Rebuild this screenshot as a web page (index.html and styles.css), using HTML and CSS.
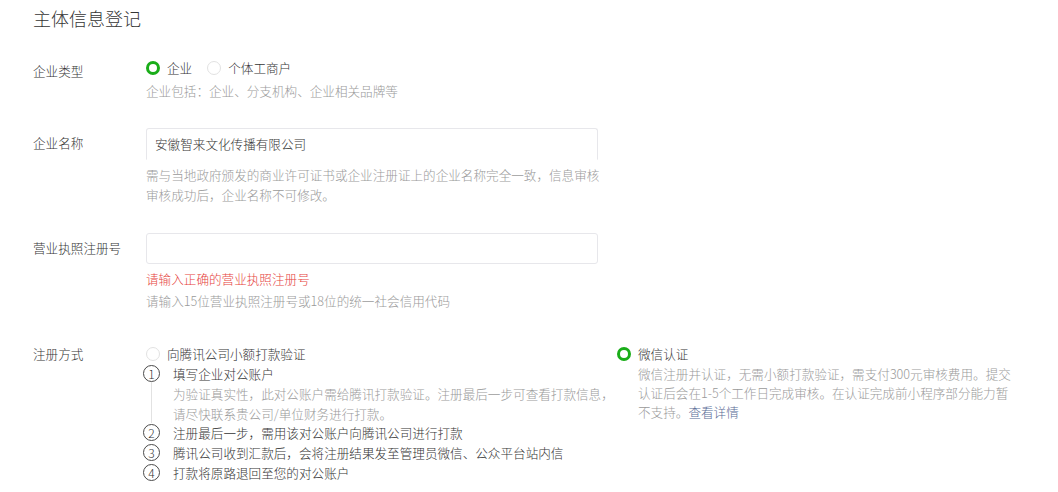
FILE: index.html
```html
<!DOCTYPE html>
<html lang="zh-CN">
<head>
<meta charset="utf-8">
<title>主体信息登记</title>
<link rel="stylesheet" href="styles.css">
</head>
<body>
<div class="page">
  <h2 class="title">主体信息登记</h2>

  <div class="row row-type">
    <div class="label label-type">企业类型</div>
    <div class="content">
      <div class="option-line">
        <label class="option"><span class="radio checked"></span><span>企业</span></label>
        <label class="option"><span class="radio"></span><span>个体工商户</span></label>
      </div>
      <div class="desc desc-type">企业包括：企业、分支机构、企业相关品牌等</div>
    </div>
  </div>

  <div class="row row-name">
    <div class="label label-input">企业名称</div>
    <div class="content">
      <div class="input input-open">安徽智来文化传播有限公司</div>
      <div class="desc desc-name">需与当地政府颁发的商业许可证书或企业注册证上的企业名称完全一致，信息审核<br>审核成功后，企业名称不可修改。</div>
    </div>
  </div>

  <div class="row row-license">
    <div class="label label-input">营业执照注册号</div>
    <div class="content">
      <div class="input input-short"></div>
      <div class="error">请输入正确的营业执照注册号</div>
      <div class="desc desc-license">请输入15位营业执照注册号或18位的统一社会信用代码</div>
    </div>
  </div>

  <div class="row row-method">
    <div class="label">注册方式</div>
    <div class="methods">
      <div class="method method-bank">
        <div class="option-line">
          <span class="radio"></span><span>向腾讯公司小额打款验证</span>
        </div>
        <ol class="steps">
          <li class="step step-first">
            <span class="num">1</span>
            <div class="step-body">
              <div class="step-title">填写企业对公账户</div>
              <div class="step-desc">为验证真实性，此对公账户需给腾讯打款验证。注册最后一步可查看打款信息，<br>请尽快联系贵公司/单位财务进行打款。</div>
            </div>
          </li>
          <li class="step">
            <span class="num">2</span>
            <div class="step-body"><div class="step-title">注册最后一步，需用该对公账户向腾讯公司进行打款</div></div>
          </li>
          <li class="step">
            <span class="num">3</span>
            <div class="step-body"><div class="step-title">腾讯公司收到汇款后，会将注册结果发至管理员微信、公众平台站内信</div></div>
          </li>
          <li class="step">
            <span class="num">4</span>
            <div class="step-body"><div class="step-title">打款将原路退回至您的对公账户</div></div>
          </li>
        </ol>
      </div>
      <div class="method method-wx">
        <div class="option-line">
          <span class="radio checked"></span><span>微信认证</span>
        </div>
        <div class="desc desc-wx">微信注册并认证，无需小额打款验证，需支付300元审核费用。提交<br>认证后会在1-5个工作日完成审核。在认证完成前小程序部分能力暂<br>不支持。<a class="link" href="#">查看详情</a></div>
      </div>
    </div>
  </div>
</div>
</body>
</html>
```

FILE: styles.css
```css
* {
  box-sizing: border-box;
}

body {
  margin: 0;
  background: #ffffff;
  color: #353535;
  font-family: "Noto Sans CJK SC", "Microsoft YaHei", sans-serif;
  font-size: 12.6px;
  font-weight: 300;
}

.page {
  padding: 6px 0 0 33px;
}

.title {
  margin: 0;
  font-size: 18px;
  font-weight: 300;
  line-height: 24px;
  color: #353535;
}

.row {
  display: flex;
}

.label {
  flex: none;
  width: 113px;
  line-height: 20px;
  color: #353535;
}

.content {
  flex: none;
  width: 452px;
}

.label-type {
  padding-top: 3px;
}

.label-input {
  padding-top: 5px;
}

.row-type {
  margin-top: 28px;
}

.row-name {
  margin-top: 27px;
}

.row-license {
  margin-top: 29px;
}

.row-method {
  margin-top: 33px;
}

.option-line {
  display: flex;
  align-items: center;
  height: 20px;
  line-height: 20px;
  white-space: nowrap;
}

.option {
  display: flex;
  align-items: center;
}

.option + .option {
  margin-left: 15px;
}

.radio {
  flex: none;
  width: 14px;
  height: 14px;
  border-radius: 50%;
  border: 1px solid #e2e2e2;
  background: #ffffff;
  margin-right: 7px;
}

.radio.checked {
  border: 3px solid #1aad19;
}

.desc {
  color: #9a9a9a;
  line-height: 20px;
}

.desc-type {
  margin-top: 3px;
}

.input {
  width: 452px;
  border: 1px solid #e7e7eb;
  border-radius: 3px;
  padding: 0 8px;
  line-height: 30px;
  color: #353535;
}

.input-open {
  height: 32px;
  border-bottom-color: transparent;
  border-radius: 3px 3px 0 0;
}

.input-short {
  height: 31px;
}

.desc-name {
  margin-top: 5px;
  line-height: 19.5px;
  white-space: nowrap;
}

.error {
  margin-top: 5px;
  line-height: 20px;
  color: #e64340;
}

.desc-license {
  margin-top: 2px;
}

.methods {
  display: flex;
}

.method-bank {
  width: 471px;
}

.method-wx {
  width: 420px;
}

.steps {
  list-style: none;
  margin: 0 0 0 -3px;
  padding: 0;
}

.step {
  position: relative;
  display: flex;
  align-items: flex-start;
  line-height: 19.8px;
}

.num {
  flex: none;
  width: 17px;
  height: 17px;
  margin-top: 1px;
  margin-right: 13px;
  border: 1px solid #4a4a4a;
  border-radius: 50%;
  font-size: 12px;
  line-height: 15px;
  text-align: center;
  color: #353535;
}

.step-first::after {
  content: "";
  position: absolute;
  left: 8px;
  top: 18px;
  bottom: 0;
  width: 1px;
  background: #e2e2e2;
}

.step-desc {
  color: #9a9a9a;
  white-space: nowrap;
}

.step-title {
  white-space: nowrap;
}

.desc-wx {
  padding-left: 21px;
  line-height: 19px;
  white-space: nowrap;
}

.link {
  color: #576b95;
  text-decoration: none;
}
```
